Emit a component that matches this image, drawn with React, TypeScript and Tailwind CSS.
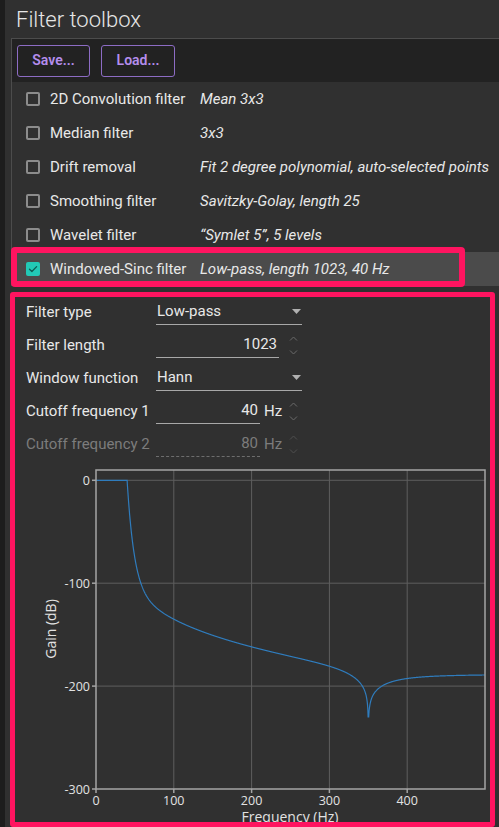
import React from "react"

const filters = [
  { name: "2D Convolution filter", desc: "Mean 3x3", on: false },
  { name: "Median filter", desc: "3x3", on: false },
  { name: "Drift removal", desc: "Fit 2 degree polynomial, auto-selected points", on: false },
  { name: "Smoothing filter", desc: "Savitzky-Golay, length 25", on: false },
  { name: "Wavelet filter", desc: "\u201cSymlet 5\u201d, 5 levels", on: false },
]

function Checkbox({ checked }: { checked?: boolean }) {
  if (checked) {
    return (
      <div className="w-[14px] h-[14px] rounded-[2px] bg-[#22c9b6] flex items-center justify-center shrink-0">
        <svg width="10" height="10" viewBox="0 0 10 10" fill="none">
          <path d="M1.5 5.2l2.4 2.3L8.6 2.6" stroke="#0e5a52" strokeWidth="1.3" strokeLinecap="round" strokeLinejoin="round" />
        </svg>
      </div>
    )
  }
  return <div className="w-[14px] h-[14px] rounded-[2px] border-2 border-[#8c8c8c] shrink-0" />
}

function Spinner({ dim }: { dim?: boolean }) {
  const c = dim ? "#4e4e4e" : "#6a6a6a"
  return (
    <div className="flex flex-col items-center gap-[9px] ml-auto mr-[4px]">
      <svg width="9" height="5" viewBox="0 0 9 5" fill="none">
        <path d="M1 4.5L4.5 1 8 4.5" stroke={c} strokeWidth="1" />
      </svg>
      <svg width="9" height="5" viewBox="0 0 9 5" fill="none">
        <path d="M1 0.5L4.5 4 8 0.5" stroke={c} strokeWidth="1" />
      </svg>
    </div>
  )
}

function SelectField({ value }: { value: string }) {
  return (
    <div className="w-[146px] h-full flex items-center justify-between border-b border-[#a8a8a8] pl-[1px] pr-[1px]">
      <span>{value}</span>
      <svg width="9" height="5" viewBox="0 0 9 5">
        <path d="M0 0h9L4.5 5z" fill="#b0b0b0" />
      </svg>
    </div>
  )
}

function NumberField({ value, unit, disabled, width }: { value: string; unit?: string; disabled?: boolean; width: string }) {
  return (
    <div className="w-[146px] h-full flex items-center">
      <div
        className={
          "h-full flex items-center justify-end pr-[2px] " +
          width +
          (disabled ? " border-b border-dashed border-[#6e6e6e]" : " border-b border-[#a8a8a8]")
        }
      >
        {value}
      </div>
      {unit && <span className="ml-[4px]">{unit}</span>}
      <Spinner dim={disabled} />
    </div>
  )
}

function FormRow({ label, disabled, children }: { label: string; disabled?: boolean; children: React.ReactNode }) {
  return (
    <div className={"h-[26px] flex items-center " + (disabled ? "text-[#7c7c7c]" : "text-[#e8e8e8]")}>
      <div className="w-[130px] whitespace-nowrap">{label}</div>
      {children}
    </div>
  )
}

// plot geometry in svg coords
const X0 = 81
const X1 = 470
const Y0 = 11
const Y1 = 330
const fx = (f: number) => X0 + (f / 500) * (X1 - X0)
const gy = (g: number) => Y0 + ((10 - g) / 310) * (Y1 - Y0)

function gain(f: number) {
  if (f <= 40) return 0
  const df = f - 40
  const base = f < 350 ? -100 * (1 - Math.exp(-df / 9)) - 38 * Math.log(1 + df / 40) : -188.5
  const d = Math.abs(f - 350)
  const notch = 20 * Math.log10(Math.max(d, 1e-6) / Math.sqrt(d * d + 63 * 63))
  return Math.max(base + notch, -230)
}

function ResponseChart() {
  const pts: string[] = []
  for (let f = 0; f <= 500; f += 0.25) {
    pts.push(fx(f).toFixed(2) + "," + gy(gain(f)).toFixed(2))
  }
  const xt = [0, 100, 200, 300, 400]
  const yt = [0, -100, -200, -300]

  return (
    <svg width="475" height="363" viewBox="0 0 475 363" className="mt-[3px] block">
      {xt.slice(1).map((f) => (
        <line key={f} x1={fx(f)} x2={fx(f)} y1={Y0} y2={Y1} stroke="#5e5e5e" strokeWidth="1" />
      ))}
      {yt.slice(0, 3).map((g) => (
        <line key={g} x1={X0} x2={X1} y1={gy(g)} y2={gy(g)} stroke="#5e5e5e" strokeWidth="1" />
      ))}
      <polyline points={pts.join(" ")} fill="none" stroke="#2f7cbd" strokeWidth="1.2" />
      <rect x={X0} y={Y0} width={X1 - X0} height={Y1 - Y0} fill="none" stroke="#a4a4a4" strokeWidth="1.5" />
      {yt.map((g) => (
        <g key={g}>
          <line x1={X0 - 4} x2={X0} y1={gy(g)} y2={gy(g)} stroke="#a4a4a4" strokeWidth="1.5" />
          <text x={X0 - 6} y={gy(g)} textAnchor="end" dominantBaseline="central" fontSize="12.5" fill="#e2e2e2" fontFamily="'Open Sans', sans-serif">
            {g === 0 ? "0" : "-" + Math.abs(g)}
          </text>
        </g>
      ))}
      {xt.map((f) => (
        <g key={f}>
          <line x1={fx(f)} x2={fx(f)} y1={Y1} y2={Y1 + 4} stroke="#a4a4a4" strokeWidth="1.5" />
          <text x={fx(f)} y={341} textAnchor="middle" dominantBaseline="central" fontSize="12.5" fill="#e2e2e2" fontFamily="'Open Sans', sans-serif">
            {f}
          </text>
        </g>
      ))}
      <text x={275} y={357} textAnchor="middle" dominantBaseline="central" fontSize="14" fill="#e2e2e2" fontFamily="'Open Sans', sans-serif">
        Frequency (Hz)
      </text>
      <text
        x={35}
        y={170}
        textAnchor="middle"
        dominantBaseline="central"
        fontSize="14"
        fill="#e2e2e2"
        fontFamily="'Open Sans', sans-serif"
        transform="rotate(-90 35 170)"
      >
        Gain (dB)
      </text>
    </svg>
  )
}

export default function App() {
  return (
    <div className="w-[499px] h-[827px] overflow-hidden bg-[#303030] flex font-['Roboto',sans-serif] text-[15px] text-[#e8e8e8]">
      {/* window behind, peeking at the left */}
      <div className="w-[5px] bg-[#1d1d1d] shrink-0" />

      <div className="flex-1 flex flex-col min-w-0">
        <div className="h-[40px] pl-[11px] flex items-center text-[22px] font-light text-[#e6e6e6]">Filter toolbox</div>

        <div className="ml-[6px] border-l border-t border-[#4c4c4c] flex flex-col">
          <div className="h-[43px] bg-[#222222] flex items-center gap-[11px] px-[5px]">
            <button className="w-[73px] h-[32px] rounded-[3px] border border-[#8d6cc4] text-[#b48ded] text-[14px] font-semibold">
              Save...
            </button>
            <button className="w-[74px] h-[32px] rounded-[3px] border border-[#8d6cc4] text-[#b48ded] text-[14px] font-semibold">
              Load...
            </button>
          </div>

          {filters.map((f) => (
            <div key={f.name} className="h-[34px] flex items-center pl-[14px]">
              <Checkbox />
              <span className="ml-[10px] w-[150px] shrink-0 whitespace-nowrap">{f.name}</span>
              <span className="italic whitespace-nowrap">{f.desc}</span>
            </div>
          ))}

          <div className="relative h-[34px] flex items-center pl-[14px] bg-[#4b4b4b]">
            <Checkbox checked />
            <span className="ml-[10px] w-[150px] shrink-0 whitespace-nowrap">Windowed-Sinc filter</span>
            <span className="italic whitespace-nowrap">Low-pass, length 1023, 40 Hz</span>
            <div className="absolute left-[-1px] top-[-5px] w-[454px] h-[40px] border-[6px] border-[#ff1460] rounded-[4px]" />
          </div>
        </div>

        <div className="ml-[5px] mr-[4px] mt-[6px] h-[535px] border-[5px] border-[#ff1460] rounded-[3px] flex flex-col pt-[2px] pl-[11px] shrink-0">
          <div className="flex flex-col gap-[7px]">
            <FormRow label="Filter type">
              <SelectField value="Low-pass" />
            </FormRow>
            <FormRow label="Filter length">
              <NumberField value="1023" width="w-[123px]" />
            </FormRow>
            <FormRow label="Window function">
              <SelectField value="Hann" />
            </FormRow>
            <FormRow label="Cutoff frequency 1">
              <NumberField value="40" unit="Hz" width="w-[104px]" />
            </FormRow>
            <FormRow label="Cutoff frequency 2" disabled>
              <NumberField value="80" unit="Hz" width="w-[104px]" disabled />
            </FormRow>
          </div>
          <div className="-ml-[11px] -mt-[1px]">
            <ResponseChart />
          </div>
        </div>
      </div>
    </div>
  )
}
